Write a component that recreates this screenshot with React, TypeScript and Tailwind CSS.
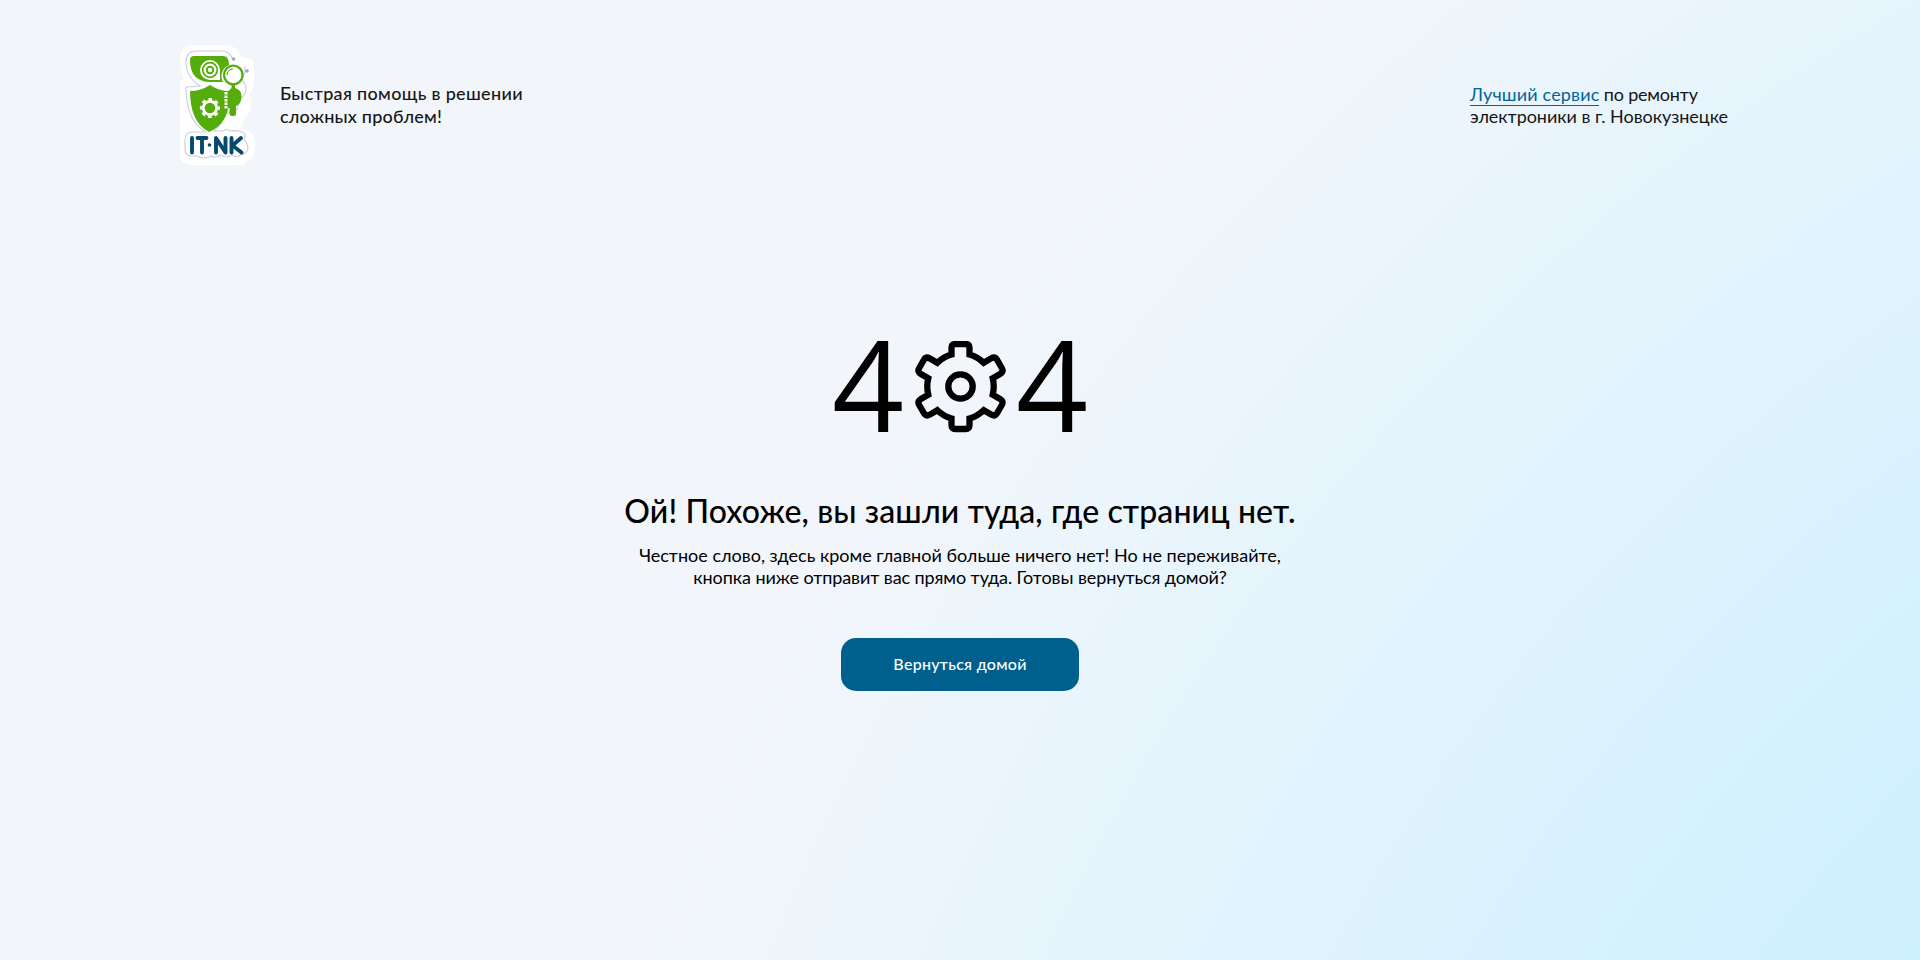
function Logo() {
  return (
    <svg className="h-[120px] w-[76px] shrink-0" viewBox="0 0 76 120" role="img" aria-label="IT-NK">
      <path d="M14 0H46q11 0 15 12l8 2q5 0 5 7v16q0 8-5 12q4 8 1 17q-3 5-6 7q0 9-8 11q12 0 15 4q4 3 4 12q0 14-8 16q-2 4-8 4H12Q0 120 0 109V40q0-5 4-6Q0 25 0 13Q0 0 14 0Z" fill="#fff" />
      <path d="M52 13Q49 6 42 6H17Q6 6 6 17q0 15 14 24q-8 1-14 1q0 34 20 45H12q-7 0-7 8v8q0 8 6 8h6q8 4 14 0q4 3 9-1q7 4 12 0q5 3 9 0q7-2 7-8q-1-5-4-7q3-7-2-8q-6-2-12-1q-3-3-7 0h-9q9-8 11-18q11 1 13-6v-7q8-4 8-11q0-6-5-10q5-5 4-13" fill="none" stroke="#c5cddd" strokeWidth="1.1" />
      <circle cx="53.5" cy="14" r="1.8" fill="#98a8c0" />
      <circle cx="67" cy="26" r="1.8" fill="#98a8c0" />
      <path d="M14 11H43Q49 11 49 20A12 12 0 0 0 43 37H29Q10 36 10 15Q10 11 14 11Z" fill="#55ad0b" />
      <path d="M20 25a10 10 0 0 1 20 0v10H30a10 10 0 0 1-10-10Z" fill="#fff" />
      <circle cx="30" cy="25" r="7.3" fill="#fff" stroke="#55ad0b" strokeWidth="1.7" />
      <circle cx="30" cy="25" r="3.2" fill="#fff" stroke="#55ad0b" strokeWidth="2" />
      <circle cx="53.300" cy="30" r="9.300" fill="#fff" stroke="#55ad0b" strokeWidth="2.3" />
      <path d="M47 30a6.5 6.5 0 0 1 6-6" fill="none" stroke="#55ad0b" strokeWidth="1.2" />
      <path d="M51.500 39h3.500v4q6.500 2 6.500 8q0 8-5.500 10v8q0 2-2.500 2h-1.500q-2.500 0-2.500-2V63h-2V47l4-4Z" fill="#55ad0b" />
      <path d="M30 40Q39 46 49 46V56Q48 79 29 87Q10 77 10 46Q21 46 30 40Z" fill="#55ad0b" />
      <path d="M46 47v17" stroke="#fff" strokeWidth="3" strokeDasharray="2.5 1" />
      <circle cx="30" cy="63" r="6.7" fill="none" stroke="#fff" strokeWidth="2.8" />
      <circle cx="30" cy="63" r="8.7" fill="none" stroke="#fff" strokeWidth="2.800" strokeDasharray="3.6 3.233" strokeDashoffset="1.8" />
      <g fill="none" stroke="#07496f" strokeWidth="3.9" strokeLinecap="round" strokeLinejoin="round">
        <path d="M12 93v14.500M17.500 93h9M22 93v14.500M36 107.500V93l9.500 14.500V93M51.500 93v14.500M61 93l-8.500 7.500l9 7" />
      </g>
      <circle cx="29.500" cy="100" r="1.8" fill="#07496f" />
    </svg>
  );
}

function Gear() {
  return (
    <svg className="size-[92px] shrink-0" viewBox="-46.5 -45.5 92 92" fill="none" stroke="#000" strokeWidth="6.3" aria-hidden="true">
      <circle r="12.2" />
      <path d="M-9 -32V-38.500Q-9 -42.500 -5 -42.500H5Q9 -42.500 9 -38.500V-32A33.200 33.200 0 0 1 23.200 -23.800L30.600 -28.100Q34.500 -30.300 36.700 -26.500L41.300 -18.500Q43.500 -14.700 39.600 -12.500L32.200 -8.200A33.200 33.200 0 0 1 32.200 8.200L39.600 12.500Q43.500 14.700 41.300 18.500L36.700 26.500Q34.500 30.300 30.600 28.100L23.200 23.800A33.200 33.200 0 0 1 9 32V38.500Q9 42.500 5 42.500H-5Q-9 42.500 -9 38.500V32A33.200 33.200 0 0 1 -23.200 23.800L-30.600 28.100Q-34.500 30.300 -36.700 26.500L-41.300 18.500Q-43.500 14.700 -39.600 12.500L-32.200 8.200A33.200 33.200 0 0 1 -32.200 -8.200L-39.600 -12.500Q-43.500 -14.700 -41.300 -18.500L-36.700 -26.500Q-34.500 -30.300 -30.600 -28.100L-23.200 -23.800A33.200 33.200 0 0 1 -9 -32Z" />
    </svg>
  );
}

export default function App() {
  return (
    <div className="flex h-[960px] flex-col bg-[radial-gradient(circle_at_2932px_1802px,#cdf0ff_1300px,#f2f6fb_2440px)] font-['Lato','Noto_Sans',sans-serif] text-black">
      <header className="flex justify-between pt-[45px] pr-[192px] pl-[180px]">
        <div className="flex">
          <Logo />
          <p className="mt-[37px] ml-6 text-[18px] leading-[23px] font-medium whitespace-nowrap text-[#161616]">
            <span className="tracking-[0.32px]">Быстрая помощь в решении</span>
            <br />
            <span className="tracking-[0.2px]">сложных проблем!</span>
          </p>
        </div>
        <p className="mt-[38px] w-[258px] text-[18px] leading-[22px] whitespace-nowrap text-[#161616]">
          <a href="#" className="border-b border-[#006699] tracking-[0.15px] text-[#006699]">Лучший сервис</a>
          <span className="tracking-[-0.2px]"> по ремонту</span>
          <br />
          <span className="tracking-[-0.04px]">электроники в г. Новокузнецке</span>
        </p>
      </header>
      <main className="flex flex-col items-center pt-[176px] text-center">
        <h1 className="flex h-[92px] items-center text-left font-['Open_Sans'] text-[126px] leading-[92px] font-normal" aria-label="404">
          <span className="w-[86px] pb-[8px] pl-[4px]">4</span>
          <Gear />
          <span className="w-[86px] pb-[8px] pl-[10px]">4</span>
        </h1>
        <h2 className="mt-[57px] text-[32px] leading-[42px] font-medium tracking-[0.12px] whitespace-nowrap">
          Ой! Похоже, вы зашли туда, где страниц нет.
        </h2>
        <p className="mt-3 text-[18px] leading-[22px] whitespace-nowrap">
          Честное слово, здесь кроме главной больше ничего нет! Но не переживайте,
          <br />
          <span className="tracking-[-0.08px]">кнопка ниже отправит вас прямо туда. Готовы вернуться домой?</span>
        </p>
        <a href="#" className="mt-[50px] flex h-[53px] w-[238px] items-center justify-center rounded-[15px] bg-[#00608d] pb-0.5 text-[16px] font-medium tracking-[0.28px] text-white">
          Вернуться домой
        </a>
      </main>
    </div>
  );
}
